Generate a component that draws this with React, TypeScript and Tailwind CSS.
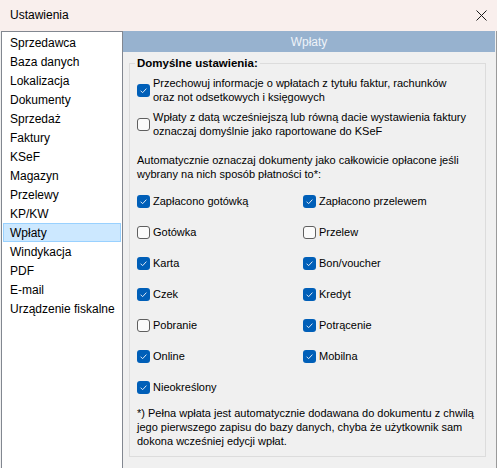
import React from "react";

const Box = ({ checked }: { checked: boolean }) =>
  checked ? (
    <span className="w-[13px] h-[13px] rounded-[3px] bg-[#005fb8] flex items-center justify-center shrink-0">
      <svg width="13" height="13" viewBox="0 0 13 13">
        <path d="M3.6 6.7 L5.6 8.7 L9.4 4.6" fill="none" stroke="#dfe9f5" strokeWidth="1" />
      </svg>
    </span>
  ) : (
    <span className="w-[13px] h-[13px] rounded-[3px] border border-[#5f5f5f] bg-[#fbfbfb] shrink-0" />
  );

const items = [
  "Sprzedawca",
  "Baza danych",
  "Lokalizacja",
  "Dokumenty",
  "Sprzedaż",
  "Faktury",
  "KSeF",
  "Magazyn",
  "Przelewy",
  "KP/KW",
  "Wpłaty",
  "Windykacja",
  "PDF",
  "E-mail",
  "Urządzenie fiskalne",
];

const opts: [string, boolean][] = [
  ["Zapłacono gotówką", true],
  ["Zapłacono przelewem", true],
  ["Gotówka", false],
  ["Przelew", false],
  ["Karta", true],
  ["Bon/voucher", true],
  ["Czek", true],
  ["Kredyt", true],
  ["Pobranie", false],
  ["Potrącenie", true],
  ["Online", true],
  ["Mobilna", true],
  ["Nieokreślony", true],
];

export default function App() {
  return (
    <div
      className="w-[497px] h-[468px] overflow-hidden flex flex-col bg-[#f0f0f0] text-black"
      style={{ fontFamily: '"Liberation Sans", Arial, sans-serif' }}
    >
      <div className="h-[31px] shrink-0 bg-[#f9efed] flex items-center justify-between pl-[10px] pr-[10px]">
        <span className="text-[12px] leading-[14px] -mt-[2px]">Ustawienia</span>
        <svg width="11" height="11" viewBox="0 0 11 11" className="-mt-[1px]">
          <path d="M0.5 0.5 L10.5 10.5 M10.5 0.5 L0.5 10.5" stroke="#1a1a1a" strokeWidth="1" />
        </svg>
      </div>
      <div className="flex flex-1 min-h-0">
        <div className="ml-[1px] w-[122px] h-[440px] shrink-0 border border-[#828790] bg-white pt-[1px] px-[1px]">
          {items.map((it) => (
            <div
              key={it}
              className={
                "h-[19px] flex items-center text-[12px] pl-[6px] border " +
                (it === "Wpłaty" ? "bg-[#cce8ff] border-[#99d1ff]" : "border-transparent")
              }
            >
              {it}
            </div>
          ))}
        </div>
        <div className="w-[372px] shrink-0 flex flex-col">
          <div className="h-[21px] bg-[#97b2cf] flex items-center justify-center text-[12px] text-[#eef3f9]">
            Wpłaty
          </div>
          <fieldset className="mt-[4px] ml-[6px] w-[357px] border border-[#dcdcdc] pl-[7px] pr-[6px] pt-[6px] pb-[8px] text-[11px] leading-[14px]">
            <legend className="font-bold text-[11.5px] leading-[14px] px-[2px] -ml-[2px]">Domyślne ustawienia:</legend>
            <div className="flex items-center gap-[3px]">
              <Box checked={true} />
              <div className="whitespace-nowrap">
                Przechowuj informacje o wpłatach z tytułu faktur, rachunków
                <br />
                oraz not odsetkowych i księgowych
              </div>
            </div>
            <div className="flex items-center gap-[3px] mt-[6px]">
              <Box checked={false} />
              <div className="whitespace-nowrap">
                Wpłaty z datą wcześniejszą lub równą dacie wystawienia faktury
                <br />
                oznaczaj domyślnie jako raportowane do KSeF
              </div>
            </div>
            <div className="mt-[15px] whitespace-nowrap">
              Automatycznie oznaczaj dokumenty jako całkowicie opłacone jeśli
              <br />
              wybrany na nich sposób płatności to*:
            </div>
            <div className="mt-[13px] grid grid-cols-[166px_1fr] gap-y-[17px]">
              {opts.map(([l, c]) => (
                <div key={l} className="h-[14px] flex items-center gap-[3px] whitespace-nowrap">
                  <Box checked={c} />
                  <span>{l}</span>
                </div>
              ))}
            </div>
            <div className="mt-[12px] whitespace-nowrap">
              *) Pełna wpłata jest automatycznie dodawana do dokumentu z chwilą
              <br />
              jego pierwszego zapisu do bazy danych, chyba że użytkownik sam
              <br />
              dokona wcześniej edycji wpłat.
            </div>
          </fieldset>
        </div>
        <div className="w-[1px] shrink-0" />
        <div className="w-[1px] shrink-0 bg-[#9a9a9a]" />
      </div>
    </div>
  );
}
